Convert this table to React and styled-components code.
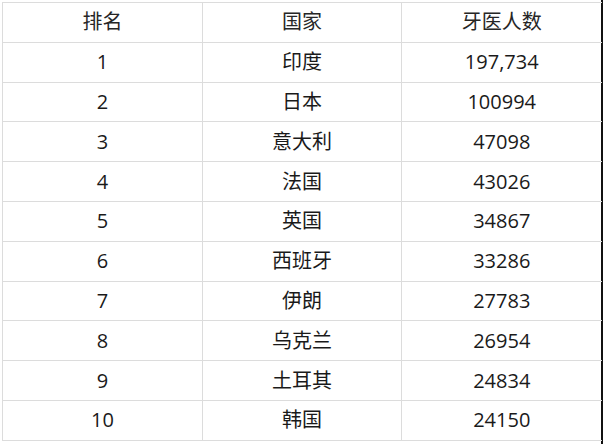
import styled, { createGlobalStyle } from "styled-components";

const GlobalStyle = createGlobalStyle`
  html, body {
    margin: 0;
    padding: 0;
    background: #fff;
  }
`;

const Page = styled.div`
  width: 603px;
  height: 444px;
  box-sizing: border-box;
  border-right: 2px solid #111;
  padding: 2px 0 0 2px;
  background: #fff;
`;

const Table = styled.table`
  width: 599px;
  border-collapse: collapse;
  table-layout: fixed;
  font-family: "Open Sans", "Noto Sans CJK SC", sans-serif;
  font-size: 20px;
  color: #1a1a1a;
`;

const Cell = styled.td`
  height: 38.8px;
  padding: 0;
  text-align: center;
  vertical-align: middle;
  border: 1px solid #dcdcdc;
  border-right: ${(p) => (p.$last ? "none" : "1px solid #dcdcdc")};
  line-height: 1;
`;

const HeadCell = styled(Cell).attrs({ as: "th" })`
  font-weight: 400;
  color: #262626;
`;

const rows = [
  ["1", "印度", "197,734"],
  ["2", "日本", "100994"],
  ["3", "意大利", "47098"],
  ["4", "法国", "43026"],
  ["5", "英国", "34867"],
  ["6", "西班牙", "33286"],
  ["7", "伊朗", "27783"],
  ["8", "乌克兰", "26954"],
  ["9", "土耳其", "24834"],
  ["10", "韩国", "24150"],
];

export default function App() {
  return (
    <>
      <GlobalStyle />
      <Page>
        <Table>
          <colgroup>
            <col style={{ width: 200 }} />
            <col style={{ width: 199 }} />
            <col style={{ width: 200 }} />
          </colgroup>
          <thead>
            <tr>
              <HeadCell>排名</HeadCell>
              <HeadCell>国家</HeadCell>
              <HeadCell $last>牙医人数</HeadCell>
            </tr>
          </thead>
          <tbody>
            {rows.map((r) => (
              <tr key={r[0]}>
                <Cell>{r[0]}</Cell>
                <Cell>{r[1]}</Cell>
                <Cell $last>{r[2]}</Cell>
              </tr>
            ))}
          </tbody>
        </Table>
      </Page>
    </>
  );
}
